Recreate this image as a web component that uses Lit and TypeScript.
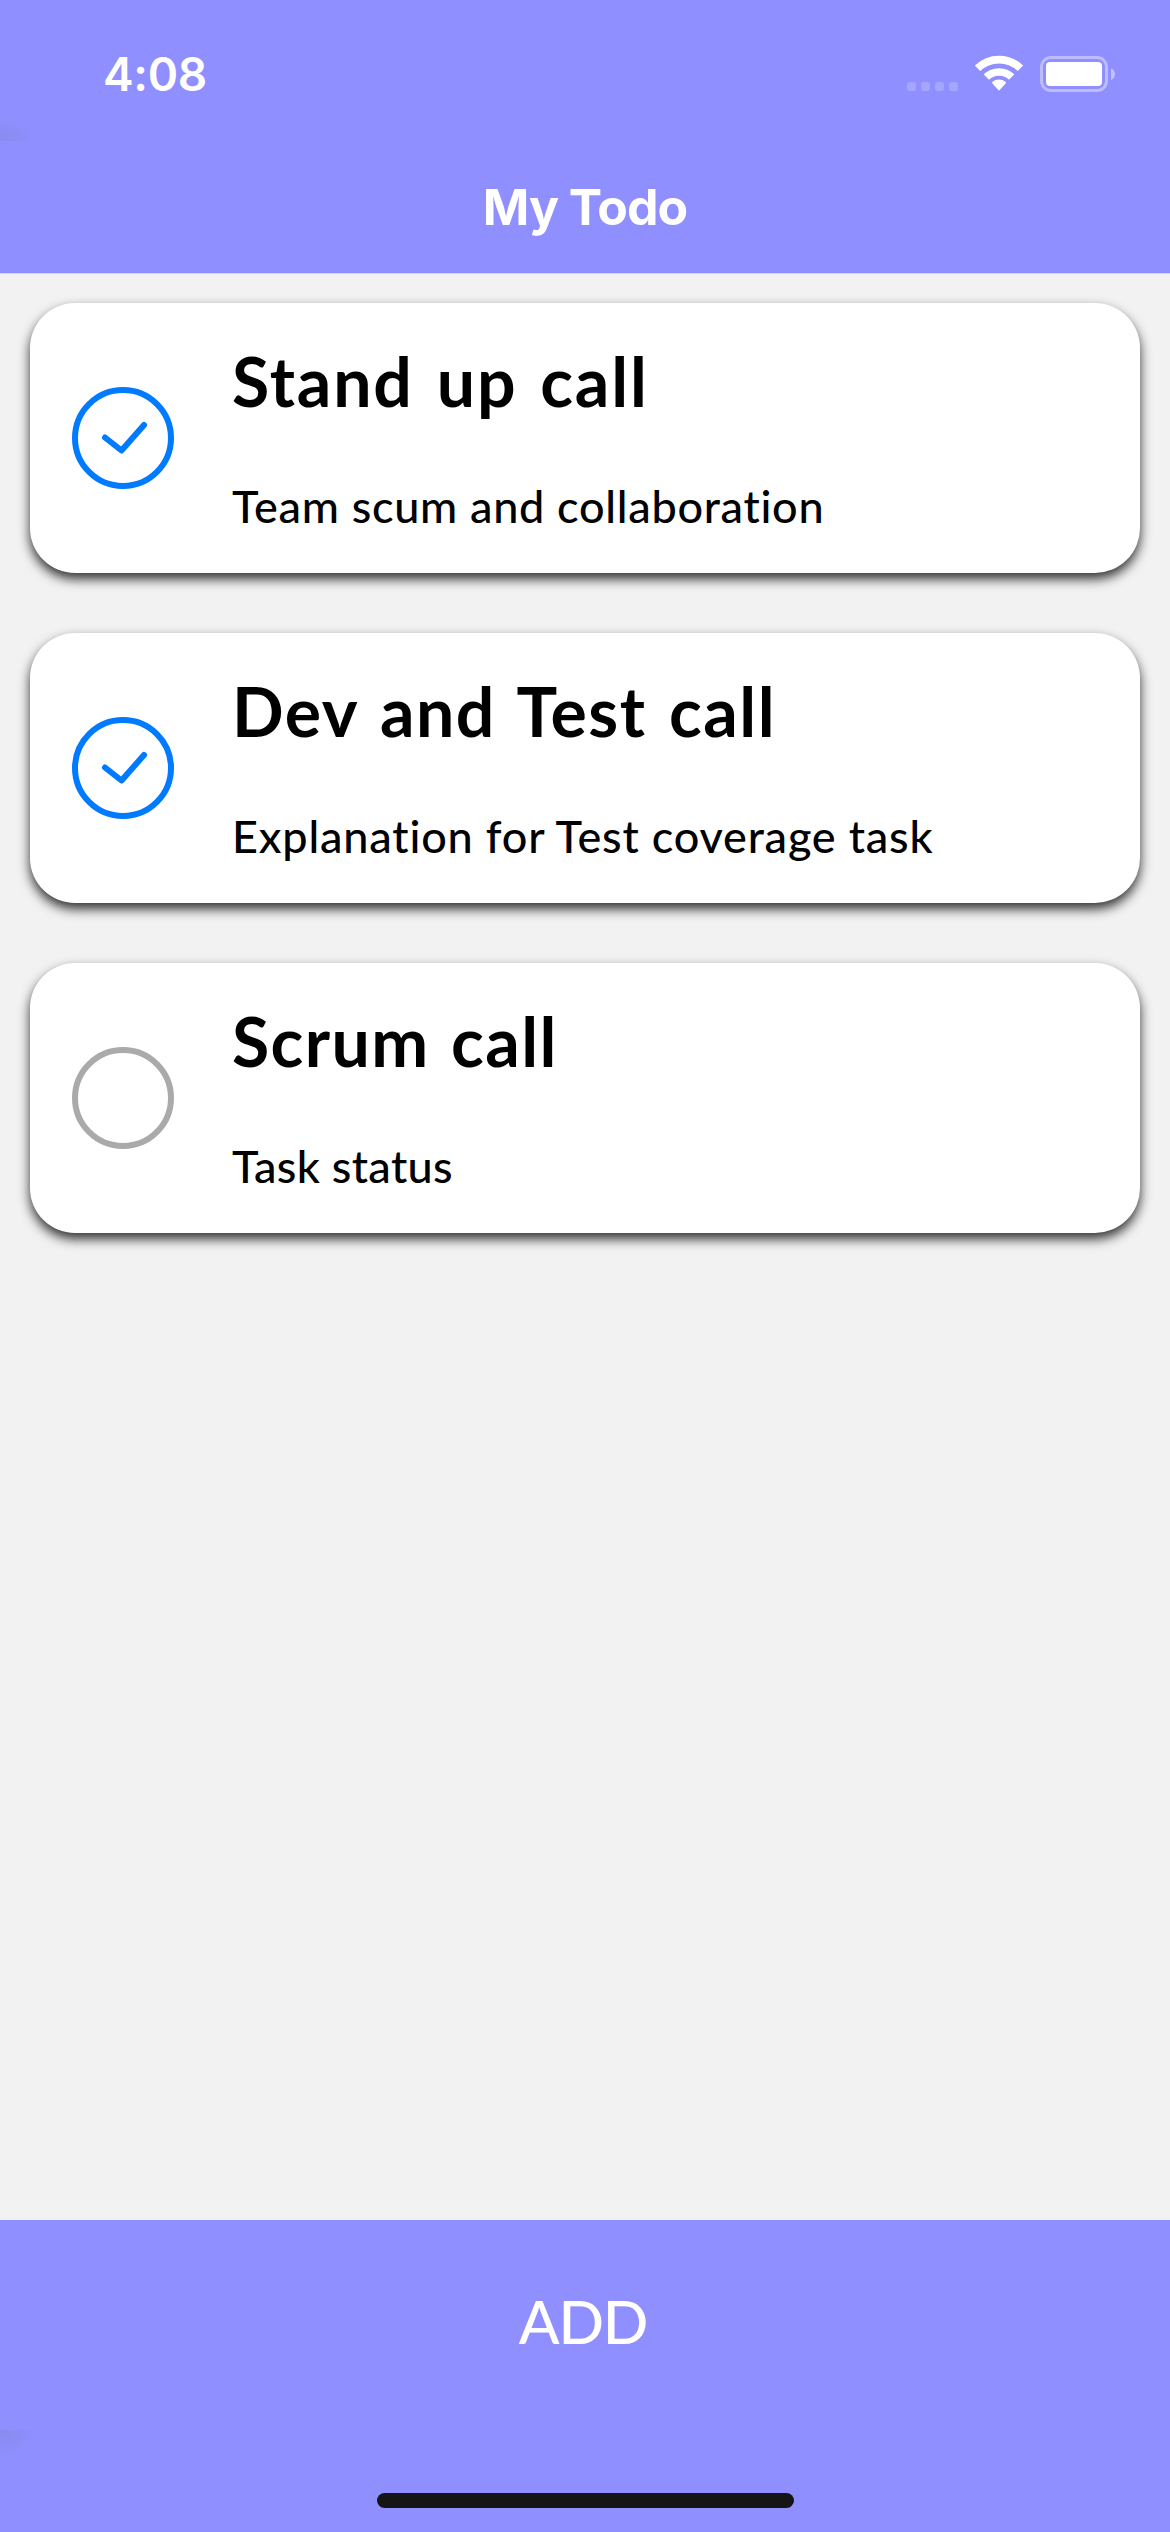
import { LitElement, html, css, svg } from 'lit';
import { customElement, property, state } from 'lit/decorators.js';
import { styleMap } from 'lit/directives/style-map.js';

interface Todo {
  title: string;
  note: string;
  done: boolean;
  titleTracking: number;
  titleWordGap: number;
  noteTracking: number;
}

@customElement('status-bar')
class StatusBar extends LitElement {
  static styles = css`
    :host {
      display: flex;
      justify-content: space-between;
      box-sizing: border-box;
      height: 141px;
      padding: 46px 54px 0 103px;
      color: #fff;
    }
    .time {
      font: 600 46px/56px Inter, "Liberation Sans", sans-serif;
      letter-spacing: -0.3px;
    }
    .icons {
      display: block;
      width: 210px;
      height: 56px;
    }
  `;
  render() {
    return html`
      <span class="time">4:08</span>
      <svg class="icons" viewBox="0 0 210 56" fill="#fff">
        ${[0, 14, 28, 42].map(
          (x) => svg`<rect x=${x + 1} y="36" width="9" height="9" rx="2.8" opacity=".2"></rect>`,
        )}
        <g fill="none" stroke="#fff">
          <path stroke-width="7.7" d="M71.500 22.300A30.800 30.800 0 0 1 114.500 22.300"></path>
          <path stroke-width="7.6" d="M80.300 31.100A18.300 18.300 0 0 1 105.700 31.100"></path>
        </g>
        <path d="M86.400 37.500Q85.500 36.500 86.500 35.700A10.500 10.500 0 0 1 99.500 35.700Q100.500 36.500 99.600 37.500L93.700 44.100Q93 44.900 92.300 44.100Z"></path>
        <rect x="135.500" y="11.500" width="65" height="33" rx="9.500" fill="none" stroke="#fff" stroke-width="3" opacity=".4"></rect>
        <rect x="140" y="16" width="56" height="24" rx="4"></rect>
        <path d="M205 22.500Q209 24.300 209 28.200Q209 32.100 205 33.900Z" opacity=".45"></path>
      </svg>
    `;
  }
}

@customElement('todo-card')
class TodoCard extends LitElement {
  @property({ attribute: false }) todo!: Todo;

  static styles = css`
    :host {
      display: flex;
      align-items: center;
      gap: 58px;
      box-sizing: border-box;
      height: 270px;
      padding: 0 42px;
      border-radius: 45px;
      background: #fff;
      box-shadow: 0 6px 12px rgba(0, 0, 0, 0.8);
      font-family: Lato, "Liberation Sans", sans-serif;
      color: #000;
    }
    .check {
      display: block;
      flex: none;
      width: 102px;
      height: 102px;
    }
    .text {
      display: flex;
      flex-direction: column;
      gap: 57px;
      height: 196px;
      white-space: nowrap;
    }
    .title {
      font-weight: 700;
      font-size: 68px;
      line-height: 82px;
    }
    .note {
      font-weight: 500;
      font-size: 45px;
      line-height: 54px;
    }
  `;
  render() {
    const t = this.todo;
    return html`
      <svg class="check" viewBox="0 0 102 102" fill="none" stroke-width="6">
        <circle cx="51" cy="51" r="48" stroke=${t.done ? '#007aff' : '#aaaaaa'}></circle>
        ${t.done
          ? svg`<path d="M33 50.500L49.500 63.500L72 38" stroke="#007aff" stroke-linecap="round" stroke-linejoin="round"></path>`
          : null}
      </svg>
      <div class="text">
        <div
          class="title"
          style=${styleMap({ letterSpacing: `${t.titleTracking}px`, wordSpacing: `${t.titleWordGap}px` })}
        >${t.title}</div>
        <div class="note" style=${styleMap({ letterSpacing: `${t.noteTracking}px` })}>${t.note}</div>
      </div>
    `;
  }
}

@customElement('app-root')
class AppRoot extends LitElement {
  @state() private todos: Todo[] = [
    { title: 'Stand up call', note: 'Team scum and collaboration', done: true, titleTracking: 1.85, titleWordGap: 4.5, noteTracking: 0.71 },
    { title: 'Dev and Test call', note: 'Explanation for Test coverage task', done: true, titleTracking: 1.5, titleWordGap: 4.5, noteTracking: 0.82 },
    { title: 'Scrum call', note: 'Task status', done: false, titleTracking: 1.4, titleWordGap: 3.5, noteTracking: 0.34 },
  ];

  static styles = css`
    :host {
      display: flex;
      flex-direction: column;
      position: relative;
      width: 1170px;
      height: 2532px;
      overflow: hidden;
      background: #f2f2f2;
    }
    .header {
      height: 273px;
      background: #8f8fff;
      border-bottom: 1px solid #d8d8d8;
    }
    .heading {
      margin: 0;
      padding-top: 36px;
      text-align: center;
      color: #fff;
      font: 700 50px/60px Inter, "Liberation Sans", sans-serif;
      letter-spacing: -1px;
    }
    .list {
      flex: 1;
      display: flex;
      flex-direction: column;
      gap: 60px;
      padding: 29px 30px 0;
    }
    .footer {
      display: flex;
      flex-direction: column;
      align-items: center;
      justify-content: space-between;
      box-sizing: border-box;
      height: 312px;
      padding: 65px 0 24px;
      background: #8f8fff;
    }
    .add {
      border: 0;
      padding: 0 4px 0 0;
      background: none;
      color: #fff;
      font: 500 60px/72px Lato, "Liberation Sans", sans-serif;
      letter-spacing: -1.2px;
    }
    .home {
      width: 417px;
      height: 15px;
      border-radius: 7.5px;
      background: #151515;
    }
    .shade {
      position: absolute;
      left: 0;
      width: 36px;
    }
    .shade-top {
      top: 119px;
      height: 22px;
      background: radial-gradient(ellipse 34px 22px at 0 100%, rgba(110, 110, 150, 0.16), rgba(110, 110, 150, 0));
    }
    .shade-bottom {
      top: 2430px;
      height: 28px;
      background: radial-gradient(ellipse 36px 28px at 0 0, rgba(110, 110, 150, 0.16), rgba(110, 110, 150, 0));
    }
  `;
  render() {
    return html`
      <div class="header">
        <status-bar></status-bar>
        <h1 class="heading">My Todo</h1>
      </div>
      <div class="list">${this.todos.map((t) => html`<todo-card .todo=${t}></todo-card>`)}</div>
      <div class="footer">
        <button class="add">ADD</button>
        <div class="home"></div>
      </div>
      <div class="shade shade-top"></div>
      <div class="shade shade-bottom"></div>
    `;
  }
}
